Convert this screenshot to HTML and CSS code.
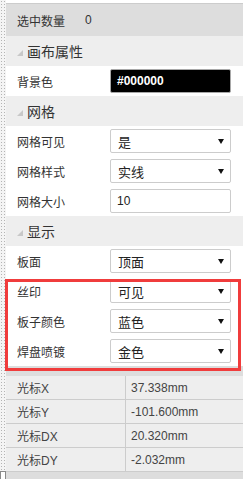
FILE: index.html
```html
<!DOCTYPE html>
<html>
<head>
<meta charset="utf-8">
<link rel="stylesheet" href="styles.css">
</head>
<body>
<div class="app">
  <div class="splitter"><div class="handle"></div></div>
  <div class="panel">
    <div class="count-row"><span class="count-label">选中数量</span><span class="count-val">0</span></div>
    <div class="group"><span class="tri"></span>画布属性</div>
    <div class="row"><span class="label">背景色</span><div class="color-input">#000000</div></div>
    <div class="group"><span class="tri"></span>网格</div>
    <div class="row"><span class="label">网格可见</span><div class="select"><span>是</span><span class="arrow"></span></div></div>
    <div class="row"><span class="label">网格样式</span><div class="select"><span>实线</span><span class="arrow"></span></div></div>
    <div class="row"><span class="label">网格大小</span><div class="input">10</div></div>
    <div class="group"><span class="tri"></span>显示</div>
    <div class="row"><span class="label">板面</span><div class="select"><span>顶面</span><span class="arrow"></span></div></div>
    <div class="row"><span class="label">丝印</span><div class="select"><span>可见</span><span class="arrow"></span></div></div>
    <div class="row"><span class="label">板子颜色</span><div class="select"><span>蓝色</span><span class="arrow"></span></div></div>
    <div class="row"><span class="label">焊盘喷镀</span><div class="select"><span>金色</span><span class="arrow"></span></div></div>
    <div class="band"></div>
    <div class="table">
      <div class="trow"><span class="tlabel">光标X</span><span class="tval">37.338mm</span></div>
      <div class="trow"><span class="tlabel">光标Y</span><span class="tval">-101.600mm</span></div>
      <div class="trow"><span class="tlabel">光标DX</span><span class="tval">20.320mm</span></div>
      <div class="trow"><span class="tlabel">光标DY</span><span class="tval">-2.032mm</span></div>
    </div>
    <div class="footer"></div>
  </div>
  <div class="highlight"></div>
</div>
</body>
</html>
```

FILE: styles.css
```css
html, body {
  margin: 0;
  padding: 0;
  background: #ffffff;
}
body {
  font-family: "Liberation Sans", "Noto Sans CJK SC", sans-serif;
  color: #333333;
  font-size: 12px;
}
.app {
  position: relative;
  display: flex;
  width: 246px;
  height: 479px;
  overflow: hidden;
}
.splitter {
  width: 6px;
  flex: 0 0 6px;
  display: flex;
  flex-direction: column;
  background-color: #f4f4f4;
  background-image: radial-gradient(circle, #b4b4b4 0.6px, transparent 1px);
  background-size: 3px 3px;
  background-position: 0 0;
}
.handle {
  margin-top: auto;
  height: 10px;
  margin-bottom: -2px;
  border: 1px solid #8a8a8a;
  background: #ffffff;
  box-sizing: border-box;
}
.panel {
  width: 237px;
  flex: 0 0 237px;
  margin-top: 3px;
  border-top: 1px solid #cccccc;
  display: flex;
  flex-direction: column;
  background: #eeeeee;
}
.count-row {
  height: 32px;
  background: #dddddd;
  display: flex;
  align-items: center;
  padding-left: 11px;
}
.count-label {
  width: 68px;
}
.count-val {
  color: #333;
}
.group {
  height: 30px;
  background: #eeeeee;
  display: flex;
  align-items: center;
  padding-left: 11px;
  font-size: 14px;
  color: #333;
}
.tri {
  width: 0;
  height: 0;
  border-left: 6px solid transparent;
  border-bottom: 6px solid #c8c8c8;
  margin-right: 4px;
  margin-top: 3px;
}
.row {
  height: 30px;
  background: #ffffff;
  display: flex;
  align-items: center;
  padding-left: 11px;
}
.label {
  width: 93px;
  flex: 0 0 93px;
}
.select, .input, .color-input {
  box-sizing: border-box;
  width: 121px;
  height: 24px;
  border: 1px solid #cccccc;
  border-radius: 2px;
  display: flex;
  align-items: center;
  padding: 0 6px 0 7px;
  font-size: 13px;
  color: #222;
  background: #ffffff;
}
.select {
  justify-content: space-between;
}
.arrow {
  width: 0;
  height: 0;
  border-left: 3px solid transparent;
  border-right: 3px solid transparent;
  border-top: 5px solid #111;
}
.input {
  font-size: 12px;
  padding-left: 6px;
}
.color-input {
  background: #000000;
  border-color: #a8a8a8;
  color: #ffffff;
  font-weight: bold;
  font-size: 12px;
  padding-left: 6px;
}
.band {
  height: 10px;
  background: #dddddd;
}
.table {
  display: flex;
  flex-direction: column;
  background: #eeeeee;
}
.trow {
  height: 23px;
  border-bottom: 1px solid #cccccc;
  display: flex;
  align-items: center;
  color: #444;
}
.tlabel {
  width: 108px;
  flex: 0 0 108px;
  padding-left: 11px;
  height: 100%;
  display: flex;
  align-items: center;
  border-right: 1px solid #cccccc;
}
.tval {
  padding-left: 5px;
}
.footer {
  flex: 1;
  background: #dddddd;
}
.highlight {
  position: absolute;
  left: 5px;
  top: 279px;
  width: 236px;
  height: 92px;
  box-sizing: border-box;
  border: 3px solid #f03c3c;
}
```
